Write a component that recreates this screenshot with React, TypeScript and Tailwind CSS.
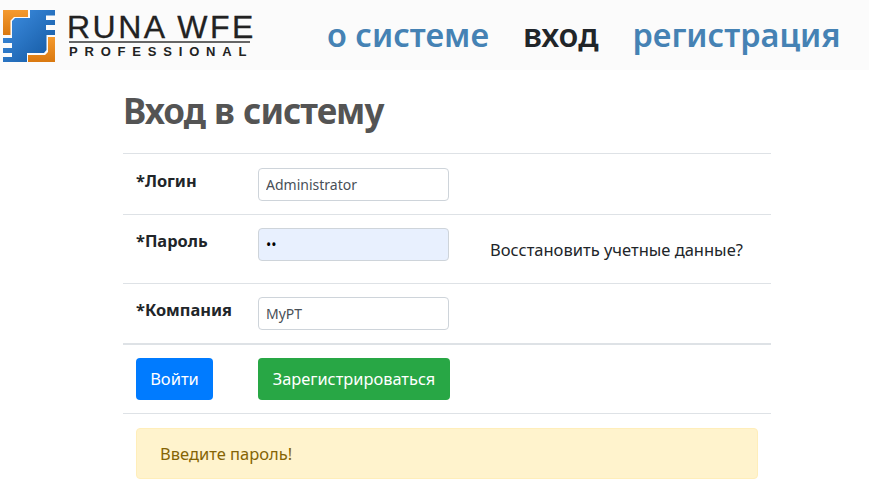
const font = { fontFamily: '"Noto Sans", "Open Sans", sans-serif' };

function LogoMark() {
  return (
    <svg width="60" height="60" viewBox="0 0 60 60" className="shrink-0 self-start mt-[6px]">
      <defs>
        <linearGradient id="chip" x1="0" y1="0" x2="1" y2="1">
          <stop offset="0" stopColor="#3f90e4" />
          <stop offset="1" stopColor="#12569f" />
        </linearGradient>
        <linearGradient id="amber" x1="0" y1="0" x2="0" y2="1">
          <stop offset="0" stopColor="#f59a2e" />
          <stop offset="1" stopColor="#d9780f" />
        </linearGradient>
      </defs>
      <path d="M3 4H28V11H14L10.5 14.5V29H3Z" fill="url(#amber)" />
      <path d="M48 31H55V56H28V49H45L48 46Z" fill="url(#amber)" />
      <path
        d="M30 4H55V9.5H46V14H55V19H46V24H55V29H46.5V44L44 47H27V56H3V51H12V47H3V42H12V37H3V32H12V15L15 12H30Z"
        fill="url(#chip)"
      />
    </svg>
  );
}

function Logo() {
  return (
    <div className="flex items-start h-[70px] gap-[7px]">
      <LogoMark />
      <div className="w-[184px] pt-[13px] text-[#222]" style={{ fontFamily: '"Liberation Sans", sans-serif' }}>
        <div className="text-[32px] leading-[28px] tracking-[2.5px] whitespace-nowrap [-webkit-text-stroke:0.3px_#222]">RUNA WFE</div>
        <div className="h-[2px] bg-[#666] ml-[2px] mr-[1px]" />
        <div className="text-[13px] leading-[14px] font-bold tracking-[6.8px] whitespace-nowrap mt-[2px] ml-[2px]">PROFESSIONAL</div>
      </div>
    </div>
  );
}

function Field({ value, filled }: { value: string; filled?: boolean }) {
  return (
    <input
      readOnly
      value={value}
      type={filled ? "password" : "text"}
      className={`w-[191px] h-[33px] border border-[#ced4da] rounded-[4px] px-[7px] text-[14px] ${filled ? "bg-[#e8f0fe] text-black" : "bg-white text-[#495057]"}`}
      style={font}
    />
  );
}

function Row({ label, value, filled, extra, className }: { label: string; value: string; filled?: boolean; extra?: string; className: string }) {
  return (
    <div className={`flex border-t border-[#dee2e6] pl-[13px] ${className}`}>
      <div className="w-[122px] text-[16.4px] leading-[24px] font-bold text-[#212529] pt-[1px]">{label}</div>
      <Field value={value} filled={filled} />
      {extra && <div className="ml-[41px] mt-[10px] text-[16.5px] leading-[24px] text-[#212529] whitespace-nowrap">{extra}</div>}
    </div>
  );
}

export default function App() {
  return (
    <div className="min-h-screen bg-white overflow-hidden" style={font}>
      <div className="h-[70px] bg-[#fbfbfb] flex items-center">
        <Logo />
        <div className="flex items-center gap-[34px] ml-[76px] text-[32.5px] font-semibold text-[#4582b4] whitespace-nowrap">
          <span>о системе</span>
          <span className="text-[#212529]">вход</span>
          <span>регистрация</span>
        </div>
      </div>
      <div className="w-[648px] ml-[123px]">
        <h1 className="text-[35px] leading-[43px] tracking-[-1px] [word-spacing:1px] font-bold text-[#545454] pt-[19px] pb-[21px]">Вход в систему</h1>
        <Row label="*Логин" value="Administrator" className="h-[61px] pt-[14px]" />
        <Row label="*Пароль" value="••" filled extra="Восстановить учетные данные?" className="h-[69px] pt-[13px]" />
        <Row label="*Компания" value="МуРТ" className="h-[60px] pt-[13px]" />
        <div className="flex border-t-2 border-[#dee2e6] h-[70px] pl-[13px] pt-[13px]">
          <button className="w-[77px] h-[42px] bg-[#007bff] text-white rounded-[4px] text-[16.5px] mr-[45px]">Войти</button>
          <button className="w-[192px] h-[42px] bg-[#28a745] text-white rounded-[4px] text-[16.4px] whitespace-nowrap">Зарегистрироваться</button>
        </div>
        <div className="border-t border-[#dee2e6] pt-[14px] px-[13px]">
          <div className="h-[51px] bg-[#fff3cd] border border-[#ffeeba] rounded-[4px] px-[23px] pt-[1px] flex items-center text-[16.5px] text-[#856404]">
            Введите пароль!
          </div>
        </div>
      </div>
    </div>
  );
}
